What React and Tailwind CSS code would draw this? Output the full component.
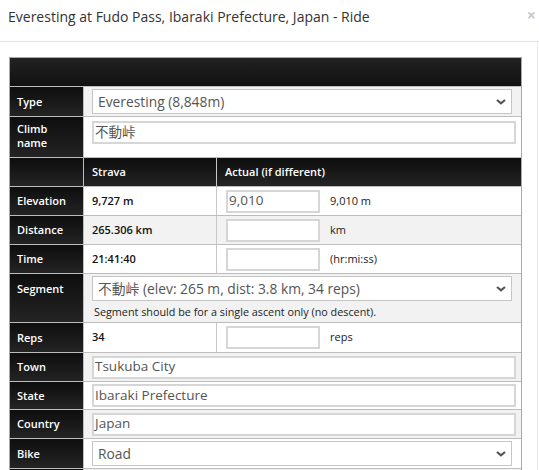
import React from "react";

const font = { fontFamily: '"Open Sans", "Noto Sans CJK JP", sans-serif' };

function Chevron() {
  return (
    <svg width="10" height="6" viewBox="0 0 10 6" className="shrink-0">
      <path d="M1 1 L5 4.4 L9 1" fill="none" stroke="#555" strokeWidth="2.2" />
    </svg>
  );
}

function Select({ children, className = "" }) {
  return (
    <div
      className={
        "flex h-[25px] w-[420px] items-center justify-between border border-[#c6c6c6] bg-white pl-[5px] pr-[5px] text-[13.8px] leading-none text-[#555] " +
        className
      }
    >
      <span className="whitespace-nowrap">{children}</span>
      <Chevron />
    </div>
  );
}

function TextInput({ value, className = "" }) {
  return (
    <div
      className={
        "flex h-[23px] items-center border-2 border-[#d6d6d6] bg-white pl-[1px] text-[13.5px] leading-none text-[#555] " +
        className
      }
    >
      <span className="whitespace-nowrap">{value}</span>
    </div>
  );
}

function Label({ children, className = "" }) {
  return (
    <div
      className={
        "w-[74px] shrink-0 border-r border-[#bdbdbd] bg-gradient-to-b from-[#0e0e0e] to-[#242424] pl-[7px] text-[11px] font-semibold leading-[14px] text-white " +
        className
      }
    >
      {children}
    </div>
  );
}

function Row({ children, h, bg = "bg-white" }) {
  return (
    <div className={"flex border-t border-[#bdbdbd] " + h + " " + bg}>{children}</div>
  );
}

// Strava value + "actual" override input row
function StatRow({ label, value, actual, unit, h = "h-[29px]", bg }) {
  return (
    <Row h={h} bg={bg}>
      <Label className="flex items-center">{label}</Label>
      <div className="flex w-[133px] shrink-0 items-center border-r border-[#c8c8c8] pl-[8px] text-[11px] font-semibold text-[#111]">
        {value}
      </div>
      <div className="flex items-center pl-[9px]">
        <TextInput value={actual} className="w-[94px]" />
        <span className="ml-[10px] text-[11px] text-[#222]">{unit}</span>
      </div>
    </Row>
  );
}

function FieldRow({ label, value, h = "h-[29px]", bg }) {
  return (
    <Row h={h} bg={bg}>
      <Label className="flex items-center">{label}</Label>
      <div className="flex items-center pl-[8px]">
        <TextInput value={value} className="w-[424px]" />
      </div>
    </Row>
  );
}

export default function App() {
  return (
    <div className="h-[470px] w-[539px] overflow-hidden bg-white" style={font}>
      {/* modal header */}
      <div className="relative h-[42px] border-b border-[#e5e5e5] pl-[8px] pt-[10px]">
        <h4 className="text-[14px] leading-none text-[#333]">
          Everesting at Fudo Pass, Ibaraki Prefecture, Japan - Ride
        </h4>
        <span className="absolute right-[3px] top-[3px] text-[16px] font-bold text-[#c8c8c8]">×</span>
      </div>

      {/* modal body */}
      <div className="w-[538px] border-r border-[#e8e8e8] pl-[9px] pt-[15px]">
        <div className="w-[513px] border border-[#a8a8a8]">
          <div className="h-[28px] bg-gradient-to-b from-[#222] to-[#111]" />

          <Row h="h-[30px]" bg="bg-[#f2f2f2]">
            <Label className="flex items-center">Type</Label>
            <div className="flex items-start pl-[8px] pt-[2px]">
              <Select>Everesting (8,848m)</Select>
            </div>
          </Row>

          <Row h="h-[41px]">
            <Label className="pt-[5px]">
              Climb
              <br />
              name
            </Label>
            <div className="pl-[8px] pt-[4px]">
              <TextInput value="不動峠" className="w-[424px]" />
            </div>
          </Row>

          <Row h="h-[29px]" bg="bg-gradient-to-b from-[#0e0e0e] to-[#242424]">
            <Label className="border-[#3a3a3a]" />
            <div className="flex w-[133px] shrink-0 items-center border-r border-[#c8c8c8] pl-[8px] text-[11px] font-semibold text-white">
              Strava
            </div>
            <div className="flex items-center pl-[8px] text-[11px] font-semibold text-white">
              Actual (if different)
            </div>
          </Row>

          <StatRow label="Elevation" value="9,727 m" actual="9,010" unit="9,010 m" />
          <StatRow label="Distance" value="265.306 km" actual="" unit="km" bg="bg-[#f2f2f2]" />
          <StatRow label="Time" value="21:41:40" actual="" unit="(hr:mi:ss)" />

          <Row h="h-[49px]" bg="bg-[#f2f2f2]">
            <Label className="pt-[8px]">Segment</Label>
            <div className="pl-[8px] pt-[2px]">
              <Select>不動峠 (elev: 265 m, dist: 3.8 km, 34 reps)</Select>
              <div className="mt-[4px] pl-[2px] text-[10.8px] leading-[14px] text-[#222]">
                Segment should be for a single ascent only (no descent).
              </div>
            </div>
          </Row>

          <StatRow label="Reps" value="34" actual="" unit="reps" h="h-[30px]" />

          <FieldRow label="Town" value="Tsukuba City" bg="bg-[#f2f2f2]" />
          <FieldRow label="State" value="Ibaraki Prefecture" h="h-[28px]" />
          <FieldRow label="Country" value="Japan" bg="bg-[#f2f2f2]" />

          <Row h="h-[30px]">
            <Label className="flex items-center">Bike</Label>
            <div className="flex items-start pl-[8px] pt-[2px]">
              <Select>Road</Select>
            </div>
          </Row>
          <Row h="h-[20px]" bg="bg-[#f2f2f2]">
            <Label />
          </Row>
        </div>
      </div>
    </div>
  );
}
